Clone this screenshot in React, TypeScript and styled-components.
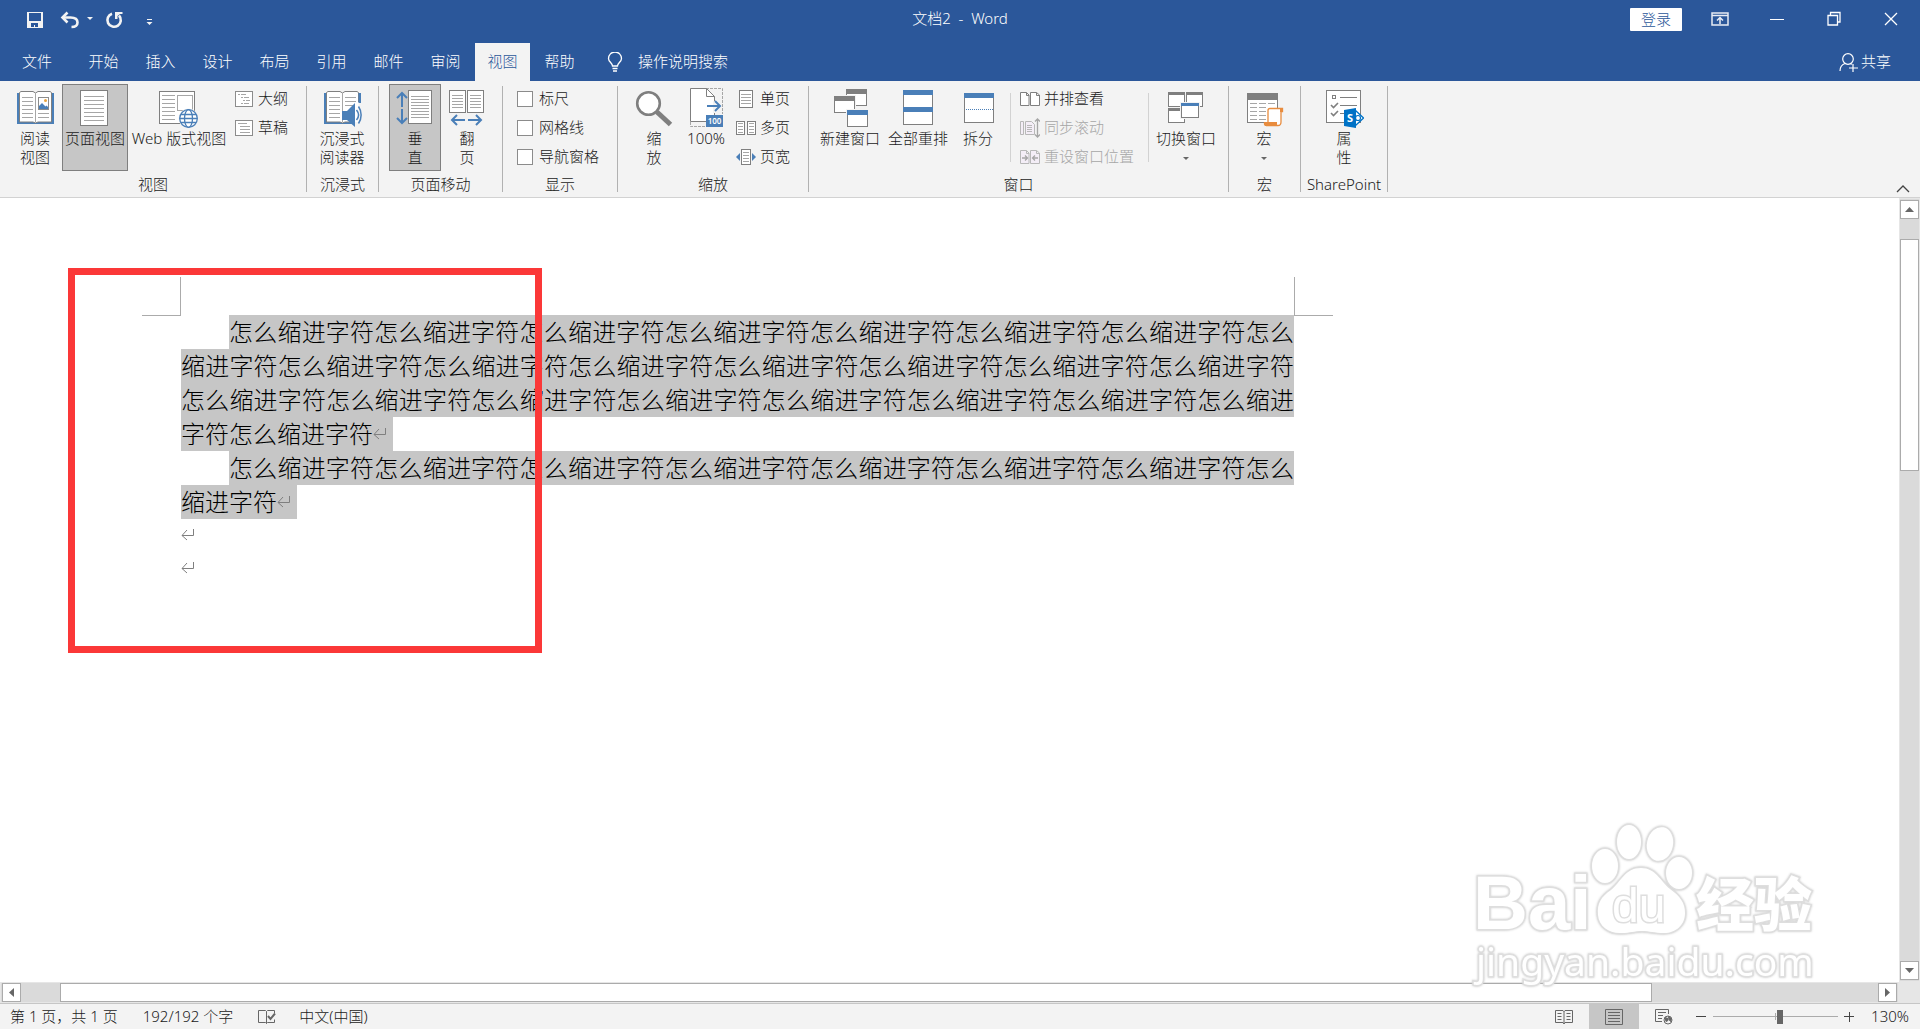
import React from 'react';
import styled, { createGlobalStyle, css } from 'styled-components';

const BLUE = '#2b579a';
const ACCENT = '#4a7fb8';
const GREY = '#7f7f7f';

const GlobalStyle = createGlobalStyle`
  *, *::before, *::after { box-sizing: border-box; }
  body {
    margin: 0;
    background: #fff;
    font-family: 'Noto Sans', 'Noto Sans CJK SC', sans-serif;
    font-size: 15px;
    font-weight: 300;
    line-height: 19px;
    color: #1a1a1a;
  }
  button, input { font: inherit; color: inherit; }
  button { margin: 0; padding: 0; border: 0; background: none; cursor: default; }
  svg { display: block; flex: none; }
`;

const Window = styled.div`
  position: relative;
  display: flex;
  flex-direction: column;
  height: 100vh;
  overflow: hidden;
`;

/* ---------- title bar and tabs ---------- */

const Header = styled.header`
  flex: none;
  background: ${BLUE};
  color: #fff;
`;

const TitleBar = styled.div`
  display: grid;
  grid-template-columns: 1fr auto 1fr;
  height: 43px;
`;

const QuickAccess = styled.div`
  display: flex;
  align-items: flex-start;
  gap: 10px;
  padding: 10px 0 0 26px;
`;

const Title = styled.h1`
  margin: 0;
  padding-top: 9px;
  font-size: 15px;
  font-weight: inherit;
  white-space: pre;
`;

const WindowControls = styled.div`
  display: flex;
  justify-content: flex-end;
  align-items: flex-start;
  padding-right: 1px;
`;

const LoginButton = styled.button`
  width: 52px;
  height: 23px;
  margin: 8px 9px 0 0;
  border-radius: 1px;
  background: #fff;
  color: ${BLUE};
`;

const ControlButton = styled.button`
  display: flex;
  justify-content: center;
  width: 57px;
  padding-top: 9px;
`;

const TabBar = styled.nav`
  display: flex;
  height: 38px;
`;

const Tab = styled.button<{ $active?: boolean; $file?: boolean }>`
  width: ${p => (p.$file ? 74 : 55)}px;
  margin-right: 2px;
  padding-bottom: 2px;
  ${p => p.$active && css`
    background: #f3f3f3;
    color: ${BLUE};
  `}
`;

const TabAction = styled.button<{ $gap: number }>`
  display: flex;
  align-items: center;
  gap: ${p => p.$gap}px;
  padding-bottom: 1px;
`;

const TellMe = styled(TabAction)`
  margin-left: 18px;
`;

const Share = styled(TabAction)`
  margin: 0 29px 0 auto;
`;

/* ---------- ribbon ---------- */

const Ribbon = styled.section`
  flex: none;
  display: flex;
  height: 117px;
  border-bottom: 1px solid #d2d2d2;
  background: #f3f3f3;
`;

const Group = styled.section<{ $left: number; $right: number }>`
  display: flex;
  flex-direction: column;
  padding-top: 3px;
  & > div { padding: 0 ${p => p.$right}px 0 ${p => p.$left}px; }
`;

const GroupBody = styled.div`
  display: flex;
  height: 87px;
`;

const GroupLabel = styled.h2`
  margin: 4px 0 0;
  font-size: 15px;
  font-weight: inherit;
  text-align: center;
`;

const GroupRule = styled.span`
  width: 1px;
  margin: 5px 0;
  background: #b1b1b1;
`;

const InnerRule = styled.span<{ $before: number; $after: number }>`
  width: 1px;
  margin: 9px ${p => p.$after}px 9px ${p => p.$before}px;
  background: #d2d2d2;
`;

const LargeButtonBox = styled.button<{ $width: number; $active?: boolean }>`
  display: flex;
  flex-direction: column;
  align-items: center;
  width: ${p => p.$width}px;
  height: 87px;
  padding-top: 3px;
  border: 1px solid ${p => (p.$active ? GREY : 'transparent')};
  background: ${p => (p.$active ? '#c6c6c6' : 'transparent')};
  white-space: nowrap;
`;

const LargeLabel = styled.span`
  margin-top: 1px;
`;

const Caret = styled.span`
  width: 0;
  margin-top: 9px;
  border: solid transparent;
  border-width: 3px 3px 0;
  border-top-color: #666;
`;

const Stack = styled.div`
  display: flex;
  flex-direction: column;
  padding: 0 4px;
`;

const SmallButton = styled.button`
  display: flex;
  align-items: center;
  gap: 4px;
  height: 29px;
  white-space: nowrap;
  &:disabled { color: #a6a6a6; }
`;

const CheckLabel = styled.label`
  display: flex;
  align-items: center;
  gap: 6px;
  height: 29px;
`;

const CheckBox = styled.input`
  appearance: none;
  width: 16px;
  height: 16px;
  margin: 0;
  border: 1px solid #8b8b8b;
  background: #fff;
`;

const CollapseButton = styled.button`
  align-self: flex-end;
  margin: 0 10px 3px auto;
`;

/* ---------- document ---------- */

const Workspace = styled.main`
  flex: 1;
  min-height: 0;
  display: grid;
  grid-template: minmax(0, 1fr) 21px / minmax(0, 1fr) 21px;
`;

const Canvas = styled.div`
  position: relative;
  overflow: hidden;
  padding: 79px 0 0 142px;
  background: #fff;
`;

const Page = styled.article`
  width: 1191px;
`;

const PageCorners = styled.div`
  display: flex;
  justify-content: space-between;
  height: 37px;
`;

const Corner = styled.span<{ $side: 'left' | 'right' }>`
  width: 39px;
  height: 39px;
  border: 0 solid #ababab;
  border-bottom-width: 1px;
  ${p => (p.$side === 'left' ? 'border-right-width: 1px;' : 'border-left-width: 1px;')}
`;

const PageText = styled.div`
  padding: 0 39px;
  font-family: 'Noto Sans CJK SC', sans-serif;
  font-size: 24px;
  line-height: 34px;
  color: #000;
`;

const Paragraph = styled.p`
  margin: 0;
  text-align: justify;
  text-indent: 48px;
`;

const EmptyParagraph = styled.p`
  height: 33px;
  margin: 0;
  line-height: 32px;
`;

/* The shading starts below the ascent so that it fills one line pitch. */
const Selected = styled.mark`
  padding-bottom: 1px;
  background: linear-gradient(transparent 2px, #c6c6c6 2px);
  box-decoration-break: clone;
  -webkit-box-decoration-break: clone;
  color: inherit;
`;

const ReturnMark = styled.svg`
  display: inline-block;
  vertical-align: -1px;
`;

const HighlightFrame = styled.div`
  position: absolute;
  left: 68px;
  top: 70px;
  width: 474px;
  height: 385px;
  border: 7px solid #fb3838;
`;

const Watermark = styled.svg`
  position: absolute;
  right: 90px;
  bottom: 29px;
  filter: drop-shadow(0 0 1px #ccc);
  pointer-events: none;
`;

/* ---------- scroll bars ---------- */

const ScrollBar = styled.div<{ $vertical?: boolean }>`
  display: flex;
  flex-direction: ${p => (p.$vertical ? 'column' : 'row')};
  padding: ${p => (p.$vertical ? '2px 1px' : '1px 2px')};
  background: #dadada;
  box-shadow: inset 0 0 0 1px #e6e6e6;
`;

const ScrollArrow = styled.button`
  flex: none;
  display: flex;
  align-items: center;
  justify-content: center;
  width: 19px;
  height: 19px;
  border: 1px solid #ababab;
  background: #fff;
`;

const Track = styled.span<{ $share: number }>`
  flex: ${p => p.$share} 1 0;
`;

const Thumb = styled(Track)`
  border: 1px solid #ababab;
  background: #fff;
`;

const ScrollCorner = styled.div`
  background: #e6e6e6;
`;

/* ---------- status bar ---------- */

const StatusBar = styled.footer`
  flex: none;
  display: flex;
  align-items: stretch;
  height: 26px;
  padding: 0 11px 0 10px;
  border-top: 1px solid #c6c6c6;
  background: #f3f3f3;
`;

const StatusItem = styled.button<{ $after?: number; $before?: number }>`
  margin-right: ${p => p.$after ?? 0}px;
  margin-left: ${p => p.$before ?? 0}px;
  white-space: nowrap;
`;

const ViewButton = styled.button<{ $active?: boolean }>`
  display: flex;
  align-items: center;
  justify-content: center;
  width: 50px;
  background: ${p => (p.$active ? '#c6c6c6' : 'transparent')};
`;

const ZoomArea = styled.div`
  display: flex;
  align-items: center;
  margin-left: 7px;
`;

const ZoomSlider = styled.input`
  appearance: none;
  width: 125px;
  height: 16px;
  margin: 0 6px 0 7px;
  background:
    linear-gradient(#ababab, #ababab) center / 1px 7px no-repeat,
    linear-gradient(#ababab, #ababab) center / 100% 1px no-repeat;
  &::-webkit-slider-thumb {
    appearance: none;
    width: 6px;
    height: 14px;
    background: #666;
  }
`;

const Spacer = styled.span`
  flex: 1;
`;

/* ---------- drawings ---------- */

const Lines = ({ x, w, ys, c = '#a6a6a6' }: { x: number; w: number; ys: number[]; c?: string }) => (
  <>{ys.map(y => <rect key={y} x={x} y={y} width={w} height={1} fill={c} />)}</>
);

const Sheet = ({ x, y, w, h, c = GREY, fill = '#fff' }: { x: number; y: number; w: number; h: number; c?: string; fill?: string }) => (
  <rect x={x + 0.5} y={y + 0.5} width={w - 1} height={h - 1} fill={fill} stroke={c} />
);

const Pane = ({ x, y, w, h, bar, c = GREY }: { x: number; y: number; w: number; h: number; bar: number; c?: string }) => (
  <g>
    <rect x={x - 1} y={y - 1} width={w + 2} height={h + 2} fill="#f3f3f3" />
    <Sheet x={x} y={y} w={w} h={h} />
    <rect x={x} y={y} width={w} height={bar} fill={c} />
  </g>
);

const Big = ({ children }: { children: React.ReactNode }) => (
  <svg width="40" height="40" viewBox="0 0 40 40" fill="none" aria-hidden="true">{children}</svg>
);

const Small = ({ children }: { children: React.ReactNode }) => (
  <svg width="20" height="20" viewBox="0 0 20 20" fill="none" aria-hidden="true">{children}</svg>
);

const Book = () => (
  <>
    <path d="M2 5h37v31H2z" fill={ACCENT} />
    <path d="M4.500 4.500L6 3.500h12l2.500 1.500L23 3.500h12l1.500 1v29.500H23l-2.500 1-2.500-1H4.500z" fill="#fff" stroke={GREY} />
    <path d="M20.500 5v29" stroke="#a6a6a6" />
    <Lines x={7} w={11} ys={[9, 13, 17, 21, 25, 29]} />
  </>
);

const ReadIcon = () => (
  <Big>
    <Book />
    <Sheet x={23} y={9} w={11} h={13} c="#8c8c8c" />
    <circle cx="30.500" cy="12.500" r="1.500" fill="#e8a33e" />
    <path d="M24 21v-3l3-3 3.500 3.500 1-1 1.500 1.500v2z" fill={ACCENT} />
    <Lines x={23} w={11} ys={[25, 29]} />
  </Big>
);

const PrintIcon = () => (
  <Big>
    <Sheet x={5} y={2} w={28} h={36} />
    <Lines x={9} w={20} ys={[8, 12, 16, 20, 24, 28, 32]} />
  </Big>
);

const WebIcon = () => (
  <Big>
    <Sheet x={0} y={3} w={36} h={33} />
    <Lines x={3} w={13} ys={[7, 11, 15, 19, 23, 27, 31]} />
    <Sheet x={18} y={7} w={16} h={16} c="#a6a6a6" />
    <circle cx="29.500" cy="30.500" r="10" fill="#f3f3f3" />
    <g stroke={ACCENT} strokeWidth="1.300">
      <circle cx="29.500" cy="30.500" r="8.800" fill="#fff" />
      <ellipse cx="29.500" cy="30.500" rx="4" ry="8.800" />
      <path d="M20.700 30.500h17.600M22 26.500h15M22 34.500h15" />
    </g>
  </Big>
);

const ImmersiveIcon = () => (
  <Big>
    <Book />
    <Lines x={23} w={11} ys={[9, 13, 17]} />
    <path d="M31 14h9v26h-9z" fill="#f3f3f3" />
    <path d="M31 14h5.500v20H31z" fill="#fff" />
    <path d="M36.500 5h2.500v10h-2.500z" fill={ACCENT} />
    <path d="M20 23h5l8-8v24l-8-7h-5z" fill={ACCENT} />
    <path d="M34.500 22c2.500 3 2.500 7 0 10M36.500 18.500c3.500 5 3.500 12 0 17" stroke={ACCENT} strokeWidth="1.500" />
  </Big>
);

const VerticalIcon = () => (
  <Big>
    <path d="M7 5v14M2 10l5-5 5 5M7 21v14M2 30l5 5 5-5" stroke={ACCENT} strokeWidth="2" />
    <Sheet x={13} y={2} w={24} h={34} />
    <Lines x={16} w={18} ys={[8, 11, 14, 17, 20, 23, 26, 29]} />
  </Big>
);

const FlipIcon = () => (
  <Big>
    <Sheet x={2} y={2} w={17} h={23} />
    <Sheet x={20} y={2} w={17} h={23} />
    <Lines x={5} w={11} ys={[7, 10, 13, 16, 19]} />
    <Lines x={23} w={11} ys={[7, 10, 13, 16, 19]} />
    <path d="M18 32H5M10 27l-5 5 5 5M21 32h13M29 27l5 5-5 5" stroke={ACCENT} strokeWidth="2" />
  </Big>
);

const ZoomIcon = () => (
  <Big>
    <path d="M23 24l13.500 12.500" stroke={GREY} strokeWidth="5" />
    <circle cx="14.500" cy="15.500" r="11.300" fill="#fff" stroke={GREY} strokeWidth="2.600" />
  </Big>
);

const HundredIcon = () => (
  <Big>
    <path d="M20 .5h16.500V26M4.500 34v4.500H20" stroke="#a6a6a6" strokeDasharray="3 1" />
    <path d="M4.500.5h16l8 8v25h-24z" fill="#fff" stroke={GREY} />
    <path d="M20.500.5v8h8" stroke={GREY} />
    <rect x="27" y="13" width="4" height="12" fill="#f3f3f3" />
    <path d="M21 18h13M29 13l5 5-5 5" stroke={ACCENT} strokeWidth="2" />
    <rect x="20" y="27" width="17" height="12" fill={ACCENT} />
    <text x="28.500" y="36" fill="#fff" fontSize="8" fontWeight="600" textAnchor="middle">100</text>
  </Big>
);

const NewWindowIcon = () => (
  <Big>
    <Pane x={16} y={1} w={21} h={17} bar={5} />
    <Pane x={4} y={8} w={21} h={17} bar={5} />
    <Pane x={17} y={22} w={21} h={17} bar={5} c={ACCENT} />
  </Big>
);

const ArrangeIcon = () => (
  <Big>
    <Pane x={5} y={2} w={30} h={18} bar={5} c={ACCENT} />
    <Sheet x={5} y={19} w={30} h={18} />
    <rect x="5" y="19" width="30" height="5" fill={ACCENT} />
  </Big>
);

const SplitIcon = () => (
  <Big>
    <Pane x={6} y={5} w={30} h={30} bar={5} c={ACCENT} />
    <path d="M8 21.500h27" stroke={ACCENT} strokeDasharray="1 1" />
  </Big>
);

const SwitchIcon = () => (
  <Big>
    <Pane x={2} y={4} w={17} h={15} bar={3} />
    <Pane x={20} y={4} w={17} h={15} bar={3} />
    <Pane x={2} y={20} w={17} h={15} bar={3} />
    <Pane x={15} y={15} w={18} h={15} bar={3} c={ACCENT} />
  </Big>
);

const MacroIcon = () => (
  <Big>
    <Pane x={3} y={5} w={31} h={30} bar={7} />
    <Lines x={6} w={7} ys={[15, 19, 23, 27, 31]} />
    <Lines x={15} w={7} ys={[15, 19, 23, 27, 31]} />
    <Lines x={24} w={7} ys={[15]} />
    <path d="M24 34V22.500c0-1.500 1-2 2-2h12.500v3H37V34c0 3-2 3.500-3 3.500H22" fill="#fff" stroke="#e88c3e" strokeWidth="1.300" />
    <path d="M20 34h13v4H22c-2 0-2.500-2-2-4zM36 20h2.500v4H36z" fill="#e88c3e" />
  </Big>
);

const PropertiesIcon = () => (
  <Big>
    <Sheet x={2} y={2} w={35} h={33} />
    <rect x="8.500" y="7.500" width="3" height="3" stroke={GREY} />
    <path d="M16 9.500h17M16 17.500h17M16 25.500h5" stroke={GREY} />
    <path d="M7 17l2.500 2.500L14 15M7 25l2.500 2.500L14 23" stroke={GREY} strokeWidth="1.600" />
    <path d="M31 22l8.500 8-8.500 8z" fill="#fff" stroke="#0072c6" strokeWidth="1.300" />
    <circle cx="34" cy="30" r="2.500" fill="#fff" stroke="#0072c6" strokeWidth="1.200" />
    <path d="M20 22l12-2v20l-12-2z" fill="#0072c6" />
    <text x="26" y="34" fill="#fff" fontSize="11" fontWeight="700" textAnchor="middle">S</text>
  </Big>
);

const OutlineIcon = () => (
  <Small>
    <Sheet x={1} y={2} w={18} h={16} c="#8c8c8c" />
    <path d="M4 5.500h2M7 5.500h5M7 8.500h2M10 8.500h5M9 11.500h2M12 11.500h4M7 14.500h2M10 14.500h5" stroke="#a6a6a6" />
  </Small>
);

const DraftIcon = () => (
  <Small>
    <Sheet x={1} y={2} w={18} h={16} c="#8c8c8c" />
    <Lines x={4} w={9} ys={[5]} />
    <Lines x={6} w={10} ys={[8, 11, 14]} />
  </Small>
);

const OnePageIcon = () => (
  <Small>
    <Sheet x={3} y={1} w={14} h={18} />
    <Lines x={5} w={10} ys={[5, 8, 11, 14]} />
  </Small>
);

const MultiPageIcon = () => (
  <Small>
    <Sheet x={0} y={3} w={9} h={14} />
    <Sheet x={11} y={3} w={9} h={14} />
    <Lines x={2} w={5} ys={[5, 8, 11, 14]} />
    <Lines x={13} w={5} ys={[5, 8, 11, 14]} />
  </Small>
);

const PageWidthIcon = () => (
  <Small>
    <Sheet x={5} y={2} w={10} h={16} />
    <Lines x={7} w={6} ys={[5, 8, 11, 14]} />
    <path d="M4 6v8l-4-4zM16 6v8l4-4z" fill={ACCENT} />
  </Small>
);

const TwoPages = ({ c, fill }: { c: string; fill: string }) => (
  <path d="M.5 3.500h6l2.500 2.500v10.500H.5zM10.500 3.500h6l3 2.500v10.500h-9zM6.500 3.500v3H9M16.500 3.500v3h3" fill={fill} stroke={c} />
);

const SideBySideIcon = () => <Small><TwoPages c={GREY} fill="#fff" /></Small>;

const SyncIcon = () => (
  <Small>
    <path d="M.5 3.500h3v13h-3zM5.500 3.500h6l3 3v10h-9z" fill="#f4eef7" stroke="#b8b8b8" />
    <Lines x={7} w={5} ys={[7, 9, 11, 13]} c="#b8b8b8" />
    <path d="M17.500 1v18M15 3.500L17.500 1 20 3.500M15 16.500l2.500 2.500 2.500-2.500" stroke="#a6a6a6" strokeWidth="1.300" />
  </Small>
);

const ResetIcon = () => (
  <Small>
    <TwoPages c="#b8b8b8" fill="#f4eef7" />
    <path d="M2 11h5M5 8.500L7.500 11 5 13.500M18 11h-5M15 8.500L12.500 11l2.500 2.500" stroke="#a6a6a6" strokeWidth="1.300" />
  </Small>
);

const ReturnGlyph = () => (
  <ReturnMark width="20" height="20" viewBox="0 0 20 20" fill="none" aria-hidden="true">
    <path d="M12.500 4v6.500H1M6 5l-5 5.500L6 15" stroke="#7f7f7f" />
  </ReturnMark>
);

/* ---------- parts ---------- */

type LargeProps = { icon: React.ReactNode; lines: string[]; width: number; active?: boolean; menu?: boolean };

const LargeButton = ({ icon, lines, width, active, menu }: LargeProps) => (
  <LargeButtonBox $width={width} $active={active} aria-pressed={active}>
    {icon}
    <LargeLabel>
      {lines.map((line, i) => (
        <React.Fragment key={line}>{i > 0 && <br />}{line}</React.Fragment>
      ))}
    </LargeLabel>
    {menu && <Caret />}
  </LargeButtonBox>
);

type GroupProps = { label: string; left: number; right: number; children: React.ReactNode };

const RibbonGroup = ({ label, left, right, children }: GroupProps) => (
  <>
    <Group $left={left} $right={right}>
      <GroupBody>{children}</GroupBody>
      <GroupLabel>{label}</GroupLabel>
    </Group>
    <GroupRule />
  </>
);

const tabs = ['文件', '开始', '插入', '设计', '布局', '引用', '邮件', '审阅', '视图', '帮助'];
const phrase = '怎么缩进字符';

export default function App() {
  return (
    <Window>
      <GlobalStyle />
      <Header>
        <TitleBar>
          <QuickAccess>
            <button aria-label="保存">
              <svg width="18" height="18" viewBox="0 0 18 18">
                <path d="M1 2h16v16H1z" fill="#f3f3f3" />
                <path d="M3 3h12v8H3zM5 13h7v4h-3v-2H8v2H5z" fill={BLUE} />
              </svg>
            </button>
            <button aria-label="撤消">
              <svg width="40" height="20" viewBox="0 0 40 20" fill="none">
                <path d="M9 7.500h7.500c4.500 0 7 2 7 5S21 17 17.500 17" stroke="#f3f3f3" strokeWidth="2.600" />
                <path d="M13.500 2.500L8.500 7.500l5 5" stroke="#f3f3f3" strokeWidth="2.600" />
                <path d="M33 7h6l-3 3z" fill="#f3f3f3" />
              </svg>
            </button>
            <button aria-label="重复">
              <svg width="20" height="20" viewBox="0 0 20 20" fill="none">
                <path d="M8 3.700A6.700 6.700 0 1 0 15 5.500" stroke="#f3f3f3" strokeWidth="2.600" />
                <path d="M11 2h7.500v2H16l-2.500 2v3H11z" fill="#f3f3f3" />
              </svg>
            </button>
            <button aria-label="自定义快速访问工具栏">
              <svg width="20" height="20" viewBox="0 0 20 20" fill="#f3f3f3">
                <path d="M13 9h5v1h-5zM12.500 12h6l-3 3z" />
              </svg>
            </button>
          </QuickAccess>
          <Title>{'文档2  -  Word'}</Title>
          <WindowControls>
            <LoginButton>登录</LoginButton>
            <ControlButton aria-label="功能区显示选项">
              <svg width="18" height="20" viewBox="0 0 18 20" fill="none" stroke="#e8ecf4">
                <rect x="1" y="4" width="16" height="12" strokeWidth="1.500" />
                <path d="M1 6.500h16M9 15V9M6 11.500L9 8.500l3 3" strokeWidth="1.500" />
              </svg>
            </ControlButton>
            <ControlButton aria-label="最小化">
              <svg width="14" height="20" viewBox="0 0 14 20"><path d="M0 10.500h14" stroke="#fff" /></svg>
            </ControlButton>
            <ControlButton aria-label="向下还原">
              <svg width="14" height="20" viewBox="0 0 14 20" fill="none" stroke="#fff">
                <path d="M1 6.500h9.500V16H1zM3.500 6.500v-3h9.500V13h-2.500" strokeWidth="1.300" />
              </svg>
            </ControlButton>
            <ControlButton aria-label="关闭">
              <svg width="14" height="20" viewBox="0 0 14 20" stroke="#fff" strokeWidth="1.300">
                <path d="M1 4l12 12M13 4L1 16" />
              </svg>
            </ControlButton>
          </WindowControls>
        </TitleBar>
        <TabBar>
          {tabs.map(t => (
            <Tab key={t} $active={t === '视图'} $file={t === '文件'}>{t}</Tab>
          ))}
          <TellMe $gap={15}>
            <svg width="16" height="20" viewBox="0 0 16 20" fill="none" stroke="#fff" strokeWidth="1.300">
              <path d="M5.500 14c0-3-4-4-4-7.500a6.300 6.300 0 0 1 13 0c0 3.500-4 4.500-4 7.500zM5.500 16.500h5M6 19h4" />
            </svg>
            操作说明搜索
          </TellMe>
          <Share $gap={3}>
            <svg width="19" height="20" viewBox="0 0 19 20" fill="none" stroke="#fff" strokeWidth="1.200">
              <circle cx="9" cy="7" r="5.300" />
              <path d="M1 19c0-4 2-6.500 5-7.500M11 11.500l2 .8M14 12v8M10 16h9" />
            </svg>
            共享
          </Share>
        </TabBar>
      </Header>

      <Ribbon>
        <RibbonGroup label="视图" left={8} right={14}>
          <LargeButton icon={<ReadIcon />} lines={['阅读', '视图']} width={54} />
          <LargeButton icon={<PrintIcon />} lines={['页面视图']} width={66} active />
          <LargeButton icon={<WebIcon />} lines={['Web 版式视图']} width={102} />
          <Stack>
            <SmallButton><OutlineIcon />大纲</SmallButton>
            <SmallButton><DraftIcon />草稿</SmallButton>
          </Stack>
        </RibbonGroup>
        <RibbonGroup label="沉浸式" left={8} right={9}>
          <LargeButton icon={<ImmersiveIcon />} lines={['沉浸式', '阅读器']} width={54} />
        </RibbonGroup>
        <RibbonGroup label="页面移动" left={10} right={9}>
          <LargeButton icon={<VerticalIcon />} lines={['垂', '直']} width={52} active />
          <LargeButton icon={<FlipIcon />} lines={['翻', '页']} width={52} />
        </RibbonGroup>
        <RibbonGroup label="显示" left={10} right={14}>
          <Stack>
            <CheckLabel><CheckBox type="checkbox" />标尺</CheckLabel>
            <CheckLabel><CheckBox type="checkbox" />网格线</CheckLabel>
            <CheckLabel><CheckBox type="checkbox" />导航窗格</CheckLabel>
          </Stack>
        </RibbonGroup>
        <RibbonGroup label="缩放" left={10} right={14}>
          <LargeButton icon={<ZoomIcon />} lines={['缩', '放']} width={52} />
          <LargeButton icon={<HundredIcon />} lines={['100%']} width={52} />
          <Stack>
            <SmallButton><OnePageIcon />单页</SmallButton>
            <SmallButton><MultiPageIcon />多页</SmallButton>
            <SmallButton><PageWidthIcon />页宽</SmallButton>
          </Stack>
        </RibbonGroup>
        <RibbonGroup label="窗口" left={8} right={8}>
          <LargeButton icon={<NewWindowIcon />} lines={['新建窗口']} width={66} />
          <LargeButton icon={<ArrangeIcon />} lines={['全部重排']} width={70} />
          <LargeButton icon={<SplitIcon />} lines={['拆分']} width={50} />
          <InnerRule $before={7} $after={5} />
          <Stack>
            <SmallButton><SideBySideIcon />并排查看</SmallButton>
            <SmallButton disabled><SyncIcon />同步滚动</SmallButton>
            <SmallButton disabled><ResetIcon />重设窗口位置</SmallButton>
          </Stack>
          <InnerRule $before={10} $after={3} />
          <LargeButton icon={<SwitchIcon />} lines={['切换窗口']} width={68} menu />
        </RibbonGroup>
        <RibbonGroup label="宏" left={8} right={9}>
          <LargeButton icon={<MacroIcon />} lines={['宏']} width={54} menu />
        </RibbonGroup>
        <RibbonGroup label="SharePoint" left={16} right={16}>
          <LargeButton icon={<PropertiesIcon />} lines={['属', '性']} width={54} />
        </RibbonGroup>
        <CollapseButton aria-label="折叠功能区">
          <svg width="14" height="10" viewBox="0 0 14 10" fill="none">
            <path d="M1 8l6-6 6 6" stroke="#444" strokeWidth="1.300" />
          </svg>
        </CollapseButton>
      </Ribbon>

      <Workspace>
        <Canvas>
          <Page>
            <PageCorners><Corner $side="left" /><Corner $side="right" /></PageCorners>
            <PageText>
              <Paragraph><Selected>{phrase.repeat(24)}<ReturnGlyph /></Selected></Paragraph>
              <Paragraph><Selected>{phrase.repeat(8)}<ReturnGlyph /></Selected></Paragraph>
              <EmptyParagraph><ReturnGlyph /></EmptyParagraph>
              <EmptyParagraph><ReturnGlyph /></EmptyParagraph>
            </PageText>
          </Page>
          <HighlightFrame />
        </Canvas>
        <ScrollBar $vertical>
          <ScrollArrow aria-label="向上滚动"><svg width="9" height="5"><path d="M0 5l4.500-5L9 5z" fill="#666" /></svg></ScrollArrow>
          <Track $share={20} />
          <Thumb $share={231} />
          <Track $share={491} />
          <ScrollArrow aria-label="向下滚动"><svg width="9" height="5"><path d="M0 0l4.500 5L9 0z" fill="#666" /></svg></ScrollArrow>
        </ScrollBar>
        <ScrollBar>
          <ScrollArrow aria-label="向左滚动"><svg width="5" height="9"><path d="M5 0L0 4.500 5 9z" fill="#666" /></svg></ScrollArrow>
          <Track $share={39} />
          <Thumb $share={1592} />
          <Track $share={226} />
          <ScrollArrow aria-label="向右滚动"><svg width="5" height="9"><path d="M0 0l5 4.500L0 9z" fill="#666" /></svg></ScrollArrow>
        </ScrollBar>
        <ScrollCorner />
      </Workspace>

      <StatusBar>
        <StatusItem $after={25}>第 1 页，共 1 页</StatusItem>
        <StatusItem $after={25}>192/192 个字</StatusItem>
        <StatusItem $after={23} aria-label="校对">
          <svg width="18" height="18" viewBox="0 0 18 18" fill="none" stroke="#666">
            <path d="M8.500 3.500l-1-1h-7v12h7l1 1 1-1h7v-3M8.500 3.500v12M8.500 3.500l1-1h7V5" />
            <path d="M10 8l2.500 3L17 5.500" strokeWidth="2" />
          </svg>
        </StatusItem>
        <StatusItem>中文(中国)</StatusItem>
        <Spacer />
        <ViewButton aria-label="阅读视图">
          <svg width="18" height="18" viewBox="0 0 18 18" fill="none" stroke="#666">
            <path d="M9 3.500L8 2.500H.5v12H8l1 1.500 1-1.500h7.500v-12H10zM9 3v13M2.500 5.500h4M2.500 8.500h4M2.500 11.500h4M11.500 5.500h4M11.500 8.500h4M11.500 11.500h4" />
          </svg>
        </ViewButton>
        <ViewButton $active aria-label="页面视图">
          <svg width="18" height="18" viewBox="0 0 18 18" fill="none" stroke="#666">
            <path d="M.5 1.500h17v15H.5zM3 4.500h12M3 7.500h12M3 10.500h12M3 13.500h12" />
          </svg>
        </ViewButton>
        <ViewButton aria-label="Web 版式视图">
          <svg width="18" height="18" viewBox="0 0 18 18" fill="none" stroke="#666">
            <path d="M7 13.500H.5v-12h13V6M3 4.500h8M3 7.500h5M3 10.500h4" />
            <circle cx="13" cy="12" r="4" fill="#f3f3f3" />
            <path d="M10 9.500l3 1v2l-2 1zM13.500 8.500l3 2-1 3-1.500-2z" fill="#666" />
          </svg>
        </ViewButton>
        <ZoomArea>
          <button aria-label="缩小"><svg width="10" height="10"><path d="M0 4.500h10" stroke="#444" /></svg></button>
          <ZoomSlider type="range" aria-label="显示比例" min={0} max={100} defaultValue={54} />
          <button aria-label="放大"><svg width="10" height="10"><path d="M0 4.500h10M5.500 0v10" stroke="#444" /></svg></button>
        </ZoomArea>
        <StatusItem $before={17}>130%</StatusItem>
      </StatusBar>

      <Watermark width="360" height="180" viewBox="0 0 360 180">
        <g fill="#fff" stroke="#dedede" strokeWidth="3" paintOrder="stroke">
          <text x="3" y="109" fontFamily="'Liberation Sans', sans-serif" fontWeight="700" fontSize="76">Bai</text>
          <text x="226" y="106" fontFamily="'Noto Sans CJK SC', sans-serif" fontWeight="900" fontSize="58">经验</text>
          <text x="6" y="156" fontFamily="'Noto Sans', sans-serif" fontWeight="400" fontSize="39">jingyan.baidu.com</text>
          <ellipse cx="135" cy="46" rx="13" ry="17" />
          <ellipse cx="159" cy="22" rx="12" ry="17" />
          <ellipse cx="190" cy="24" rx="13" ry="17" transform="rotate(12 190 24)" />
          <ellipse cx="209" cy="53" rx="13" ry="16" />
          <path d="M171 48c-16 0-20 14-30 22-10 7-14 13-13 25 1 12 12 19 24 18 8 0 12-2 20-2s12 2 22 2c12 0 21-8 21-20 0-10-5-17-15-24-10-8-14-21-29-21z" />
          <text x="142" y="102" fontFamily="'Liberation Sans', sans-serif" fontWeight="400" fontSize="48">du</text>
        </g>
      </Watermark>
    </Window>
  );
}
